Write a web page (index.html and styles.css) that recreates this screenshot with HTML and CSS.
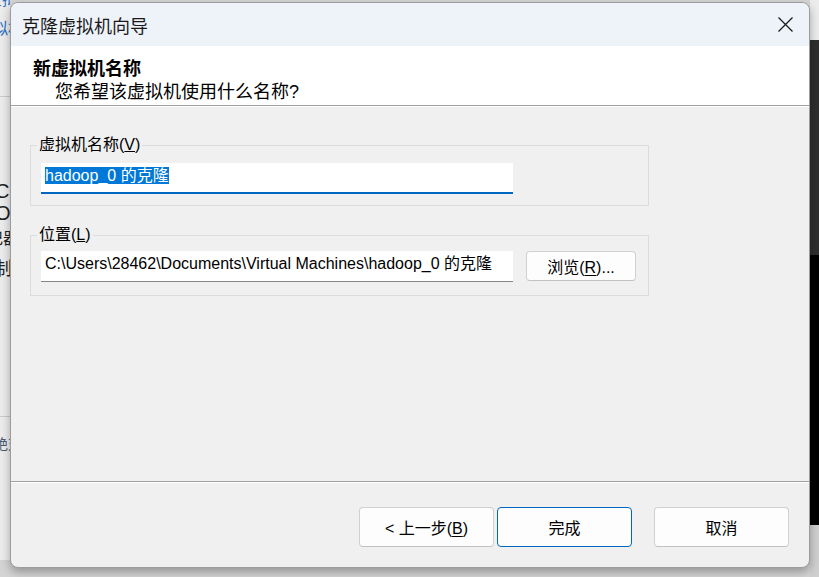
FILE: index.html
```html
<!DOCTYPE html>
<html lang="zh-CN">
<head>
    <meta charset="UTF-8">
    <meta name="viewport" content="width=device-width, initial-scale=1.0">
    <title>克隆虚拟机向导</title>
    <link rel="stylesheet" href="styles.css">
</head>
<body>
    <div class="desktop">
        <div class="side-window">
            <div class="frag frag-link frag-1">虚拟机</div>
            <div class="frag frag-link frag-2">虚拟机</div>
            <div class="side-divider side-divider-1"></div>
            <div class="frag frag-big frag-3">CS</div>
            <div class="frag frag-big frag-4">O</div>
            <div class="frag frag-5">记器</div>
            <div class="frag frag-6">复制表</div>
            <div class="side-divider side-divider-2"></div>
            <div class="frag frag-muted frag-7">绝对</div>
        </div>

        <div class="dialog">
            <div class="titlebar">
                <span class="title">克隆虚拟机向导</span>
                <button class="close" title="关闭">
                    <svg width="15" height="15" viewBox="0 0 15 15">
                        <path d="M0.5 0.5 L14.5 14.5 M14.5 0.5 L0.5 14.5" stroke="#1b1b1b" stroke-width="1.3" fill="none"/>
                    </svg>
                </button>
            </div>

            <div class="header">
                <div class="header-title">新虚拟机名称</div>
                <div class="header-sub">您希望该虚拟机使用什么名称?</div>
            </div>

            <div class="content">
                <fieldset class="group group-name">
                    <legend>虚拟机名称(<u>V</u>)</legend>
                    <div class="field field-active"><span class="selected">hadoop_0 的克隆</span></div>
                </fieldset>

                <fieldset class="group group-location">
                    <legend>位置(<u>L</u>)</legend>
                    <div class="field-row">
                        <div class="field">C:\Users\28462\Documents\Virtual Machines\hadoop_0 的克隆</div>
                        <button class="btn btn-browse">浏览(<u>R</u>)...</button>
                    </div>
                </fieldset>
            </div>

            <div class="footer">
                <button class="btn btn-back">&lt; 上一步(<u>B</u>)</button>
                <button class="btn btn-primary">完成</button>
                <button class="btn btn-cancel">取消</button>
            </div>
        </div>

        <div class="dark-window">
            <div class="dark-top"></div>
            <div class="dark-mid"></div>
            <div class="dark-black"></div>
            <div class="dark-rest"></div>
        </div>
    </div>
</body>
</html>
```

FILE: styles.css
```css
html,
body {
    margin: 0;
    overflow: hidden;
    background-color: #d4d4d4;
}
body {
    font-family: "Liberation Sans", "Noto Sans CJK SC", sans-serif;
    color: #000000;
}
.desktop {
    width: 819px;
    height: 577px;
    display: flex;
    align-items: flex-start;
    overflow: hidden;
}

/* window behind, on the left */
.side-window {
    width: 10px;
    height: 560px;
    flex-shrink: 0;
    background-color: #ececec;
    overflow: hidden;
}
.frag {
    white-space: nowrap;
    font-size: 16px;
    line-height: 16px;
    color: #202020;
}
.frag-link {
    color: #2f6fc6;
}
.frag-muted {
    color: #4a5a70;
}
.frag-big {
    font-size: 20px;
    line-height: 20px;
}
.frag-1 {
    margin-top: -9px;
    margin-left: -14px;
    height: 17px;
    line-height: 17px;
}
.frag-2 {
    margin-top: 11px;
    margin-left: -24px;
    height: 19px;
    line-height: 19px;
}
.side-divider {
    border-top: 1px solid #cacaca;
}
.side-divider-1 {
    margin-top: 58px;
}
.frag-3 {
    margin-top: 84px;
    margin-left: -5px;
}
.frag-4 {
    margin-top: 2px;
    margin-left: -5px;
}
.frag-5 {
    margin-top: 8px;
    margin-left: -13px;
}
.frag-6 {
    margin-top: 12px;
    margin-left: -24px;
    font-size: 18px;
    line-height: 20px;
}
.side-divider-2 {
    margin-top: 137px;
}
.frag-7 {
    margin-top: 19px;
    margin-left: -6px;
    font-size: 14px;
}

/* window behind, on the right */
.dark-window {
    flex: 1;
    height: 577px;
    display: flex;
    flex-direction: column;
}
.dark-top {
    height: 40px;
    background-color: #ececec;
}
.dark-mid {
    height: 215px;
    background-color: #2e2e2e;
}
.dark-black {
    height: 270px;
    background-color: #000000;
}
.dark-rest {
    flex: 1;
    background-color: #cfcfcf;
}

/* dialog */
.dialog {
    position: relative;
    z-index: 1;
    margin-top: 2px;
    width: 800px;
    height: 566px;
    flex-shrink: 0;
    box-sizing: border-box;
    border: 1px solid #9c9c9c;
    border-radius: 8px;
    background-color: #f0f0f0;
    overflow: hidden;
    display: flex;
    flex-direction: column;
    box-shadow: 0 4px 10px rgba(0, 0, 0, 0.3);
}
.titlebar {
    height: 43px;
    flex-shrink: 0;
    background-color: #eef2f9;
    display: flex;
    align-items: center;
    justify-content: space-between;
    padding: 0 16px 0 11px;
}
.title {
    font-size: 18px;
    color: #1a1a1a;
}
.close {
    border: none;
    background: none;
    padding: 0;
    width: 15px;
    height: 15px;
    display: flex;
}
.header {
    flex-shrink: 0;
    box-sizing: border-box;
    background-color: #ffffff;
    border-bottom: 1px solid #a0a0a0;
    padding: 12px 0 0 22px;
    height: 60px;
    font-size: 18px;
    line-height: 23px;
}
.header-title {
    font-weight: bold;
}
.header-sub {
    padding-left: 22px;
}
.content {
    flex: 1;
    border-top: 1px solid #ffffff;
    padding: 28px 0 0 19px;
}
.group {
    width: 619px;
    box-sizing: border-box;
    margin: 0;
    border: 1px solid #dcdcdc;
    padding: 8px 10px 11px 10px;
    min-inline-size: 0;
}
.group legend {
    font-size: 16px;
    line-height: 20px;
    padding: 0 2px;
    margin-left: -4px;
}
.group-location {
    margin-top: 19px;
    padding-top: 6px;
    padding-bottom: 13px;
}
.field-row {
    display: flex;
    align-items: flex-start;
    gap: 13px;
}
.field {
    width: 472px;
    height: 31px;
    box-sizing: border-box;
    background-color: #ffffff;
    border-bottom: 1px solid #868686;
    padding: 3px 0 0 4px;
    font-size: 16px;
    line-height: 19px;
    white-space: nowrap;
    overflow: hidden;
}
.field-active {
    border-bottom: 2px solid #0067c0;
}
.selected {
    background-color: #0078d7;
    color: #ffffff;
}
.btn {
    font-family: inherit;
    font-size: 16px;
    color: #000000;
    background-color: #fdfdfd;
    border: 1px solid #d0d0d0;
    border-bottom-color: #c2c2c2;
    border-radius: 4px;
    padding: 0;
    cursor: pointer;
}
.btn u {
    text-underline-offset: 2px;
}
.btn-browse {
    width: 110px;
    height: 30px;
}
.footer {
    height: 86px;
    flex-shrink: 0;
    box-sizing: border-box;
    border-top: 1px solid #a0a0a0;
    box-shadow: inset 0 1px 0 #ffffff;
    display: flex;
    justify-content: flex-end;
    align-items: flex-start;
    padding: 25px 20px 0 0;
}
.footer .btn {
    width: 135px;
    height: 40px;
}
.btn-primary {
    margin-left: 3px;
    border-color: #0067c0;
}
.btn-cancel {
    margin-left: 22px;
}
```
